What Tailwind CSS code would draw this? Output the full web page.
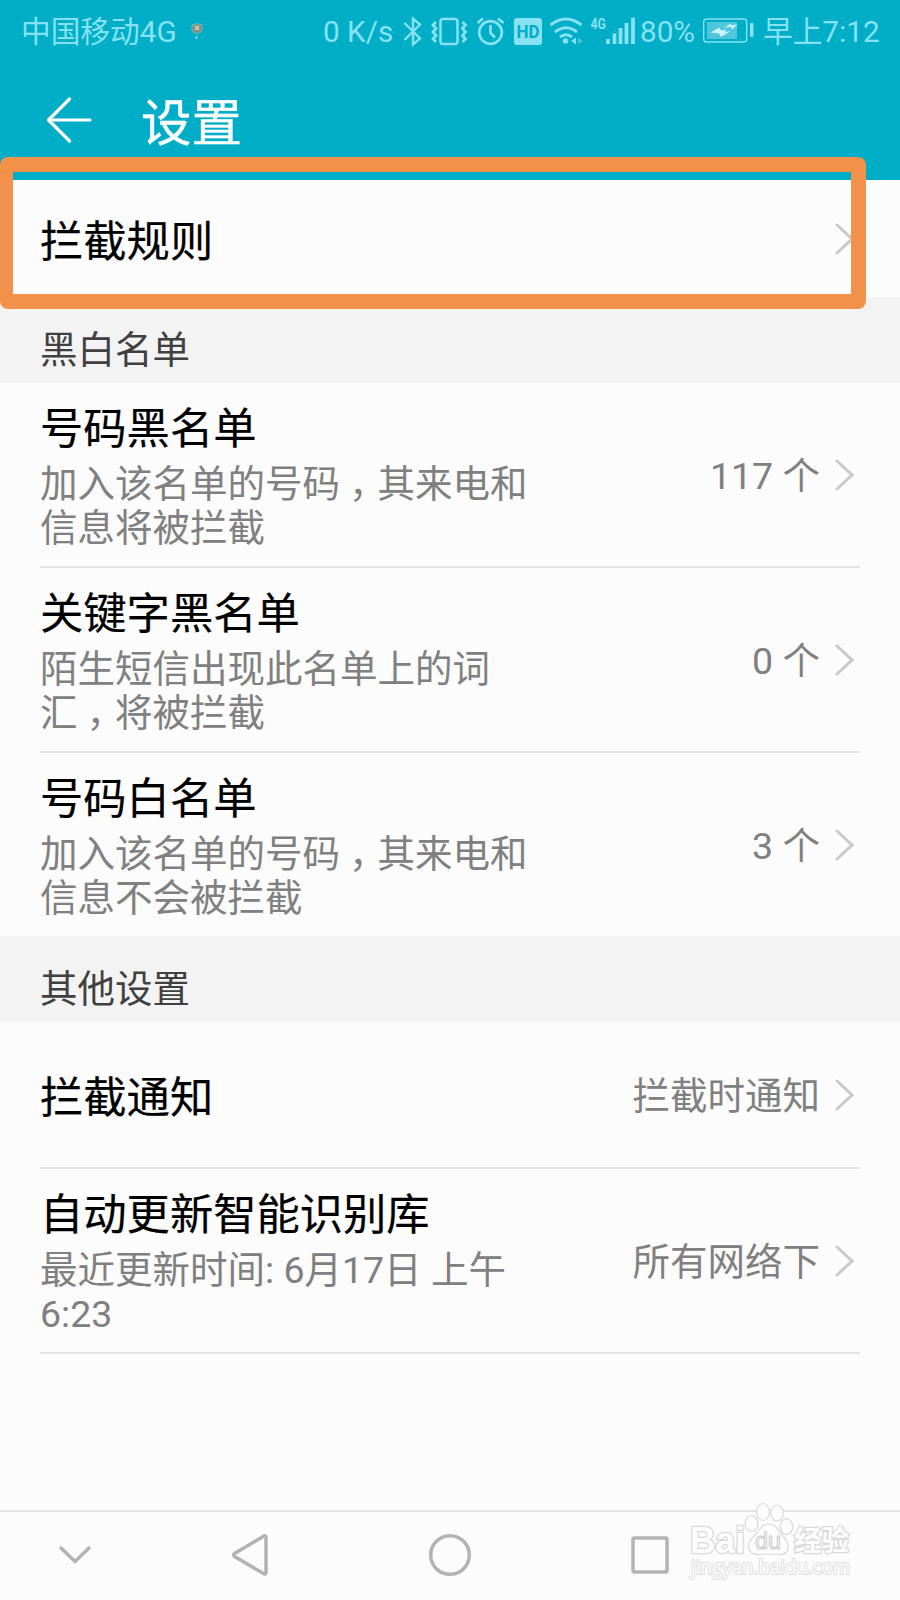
<!DOCTYPE html>
<html lang="zh-CN">
<head>
<meta charset="utf-8">
<title>设置</title>
<script src="https://cdn.jsdelivr.net/npm/@tailwindcss/browser@4"></script>
</head>
<body class="w-[900px] h-[1600px] overflow-hidden bg-[#fcfcfc] font-[Roboto,'Noto_Sans_CJK_SC',sans-serif]">
<div class="relative flex h-[1600px] w-[900px] flex-col">
  <header class="h-[180px] shrink-0 bg-[#00adc7]">
    <div class="flex h-[62px] items-center pl-[21px] text-[29.700px] leading-[40px] whitespace-nowrap text-[#86e2f0]">
      <span class="w-[170px] pt-px">中国移动4G</span>
      <svg class="w-[12px] h-[18px]" viewBox="0 0 12 18"><path d="M1 3Q6 0 11 3V9Q6 14 1 9Z" fill="#7d8c85" stroke="#62c3bd"/><path d="M4 4l4 4M8 4L4 8" stroke="#e5c9b5" stroke-width="1.5"/><circle cx="5.500" cy="15.500" r="1.200" fill="#86e2f0"/></svg>
      <span class="ml-[120px] w-[77px] pt-px">0 K/s</span>
      <svg class="w-[240px] h-[60px] shrink-0" viewBox="400 0 240 60" fill="none" stroke="#86e2f0" stroke-width="2.400">
        <path d="M404.500 22l15.500 15.500-7 6V17.500l7 6L404.500 39"/>
        <rect x="440.500" y="18" width="17" height="25" rx="2.500" stroke-width="2.500"/>
        <path d="M436 21l-3 3 3 3.500-3 3.500 3 3.500-3 3.500 3 3M462.500 21l3 3-3 3.500 3 3.500-3 3.500 3 3.500-3 3" stroke-width="2.800"/>
        <circle cx="490.500" cy="31.500" r="11.300" stroke-width="2.700"/><path d="M490.500 24v8l4.500 4.500M477.500 22l5.500-4.500M503.500 22l-5.500-4.500" stroke-width="2.700"/>
        <rect x="514" y="17" width="28" height="27" rx="3" fill="#86e2f0" stroke="none"/>
        <text x="528" y="36.500" text-anchor="middle" font-size="17.500" font-weight="700" textLength="23" lengthAdjust="spacingAndGlyphs" fill="#00adc7" stroke="none">HD</text>
        <path d="M550.500 24q15.500-12 31 0M555 31q11-8.500 22 0M560 36q6-4.500 12 0" stroke-width="3"/>
        <circle cx="565.500" cy="40" r="2.800" fill="#86e2f0" stroke="none"/><path d="M576 36.500v7l-5-3.500z" fill="#86e2f0" stroke="none"/><path d="M578 36.500v7l5-3.500z" fill="#3fc1d6" stroke="none"/>
        <text x="590.500" y="27.500" font-size="15" font-weight="700" textLength="15.500" lengthAdjust="spacingAndGlyphs" fill="#86e2f0" stroke="none">4G</text>
        <path d="M608 38v5M614.500 32.500V43M620.500 27V43M626.500 22V43M633 16.500V43" stroke-width="3.800"/>
      </svg>
      <span class="w-[62px] pt-px">80%</span>
      <svg class="w-[52px] h-[30px] shrink-0" viewBox="702 16 52 30"><rect x="703.700" y="19" width="43" height="23" rx="3" fill="none" stroke="#86e2f0" stroke-width="1.400"/><rect x="707" y="22" width="30" height="17" fill="#4fc7da"/><path d="M710.500 32.500l9-5 1.500 3 5-1-1 2.500 6-1-10 6-2-3.500zM724.500 27.500l6-4 1.500 2 5.500-1.500-5 5.500-2-2.500z" fill="#c9f3f8"/><rect x="750" y="23" width="3.500" height="14" rx="1" fill="#86e2f0"/></svg>
      <span class="ml-[9px] pt-px">早上7:12</span>
    </div>
    <div class="flex h-[116px] items-center pl-[45px] text-white">
      <svg class="w-[48px] h-[48px]" viewBox="45 96 48 48" fill="none" stroke="currentColor" stroke-width="3.200" stroke-linecap="round" stroke-linejoin="round"><path d="M90 120H48.500M69.500 99l-21 21 21 21"/></svg>
      <h1 class="ml-[48px] pt-[8px] text-[50.500px] leading-[60px] [-webkit-text-stroke:0.4px]">设置</h1>
    </div>
  </header>

  <main class="flex flex-col text-[37.500px] text-[#808080]">
    <section class="flex h-[117px] items-center justify-between pl-[40px] pr-[46px]">
      <h2 class="pt-[8px] text-[43.300px] leading-[60px] text-black [-webkit-text-stroke:0.2px]">拦截规则</h2>
      <svg class="w-[19px] h-[34px]" viewBox="0 0 19 34" fill="none" stroke="#c9c9c9" stroke-width="3" stroke-linecap="round"><path d="M2 3l15 14L2 31"/></svg>
    </section>
    <div class="flex h-[86px] items-center bg-[#f3f3f3] pl-[40px] pt-[19px] text-[#404040] leading-[50px]">黑白名单</div>

    <section class="mx-10 flex h-[185px] items-center justify-between border-b-2 border-[#e4e4e4] pr-[6px]">
      <div class="leading-[44px]"><h2 class="pt-[1px] pb-[2px] text-[43.300px] leading-[60px] text-black [-webkit-text-stroke:0.2px]">号码黑名单</h2><p>加入该名单的号码<span class="relative left-[9px]">，</span>其来电和<br>信息将被拦截</p></div>
      <div class="flex items-center gap-[15px]"><span class="pt-[3px]">117 个</span><svg class="w-[19px] h-[34px]" viewBox="0 0 19 34" fill="none" stroke="#c9c9c9" stroke-width="3" stroke-linecap="round"><path d="M2 3l15 14L2 31"/></svg></div>
    </section>
    <section class="mx-10 flex h-[185px] items-center justify-between border-b-2 border-[#e4e4e4] pr-[6px]">
      <div class="leading-[44px]"><h2 class="pt-[1px] pb-[2px] text-[43.300px] leading-[60px] text-black [-webkit-text-stroke:0.2px]">关键字黑名单</h2><p>陌生短信出现此名单上的词<br>汇<span class="relative left-[9px]">，</span>将被拦截</p></div>
      <div class="flex items-center gap-[15px]"><span class="pt-[3px]">0 个</span><svg class="w-[19px] h-[34px]" viewBox="0 0 19 34" fill="none" stroke="#c9c9c9" stroke-width="3" stroke-linecap="round"><path d="M2 3l15 14L2 31"/></svg></div>
    </section>
    <section class="mx-10 flex h-[183px] items-center justify-between pr-[6px]">
      <div class="leading-[44px]"><h2 class="pt-[1px] pb-[2px] text-[43.300px] leading-[60px] text-black [-webkit-text-stroke:0.2px]">号码白名单</h2><p>加入该名单的号码<span class="relative left-[9px]">，</span>其来电和<br>信息不会被拦截</p></div>
      <div class="flex items-center gap-[15px]"><span class="pt-[3px]">3 个</span><svg class="w-[19px] h-[34px]" viewBox="0 0 19 34" fill="none" stroke="#c9c9c9" stroke-width="3" stroke-linecap="round"><path d="M2 3l15 14L2 31"/></svg></div>
    </section>

    <div class="flex h-[86px] items-center bg-[#f3f3f3] pl-[40px] pt-[19px] text-[#404040] leading-[50px]">其他设置</div>
    <section class="mx-10 flex h-[147px] items-center justify-between border-b-2 border-[#e4e4e4] pr-[6px]">
      <h2 class="pt-[8px] text-[43.300px] leading-[60px] text-black [-webkit-text-stroke:0.2px]">拦截通知</h2>
      <div class="flex items-center gap-[15px]"><span class="pt-[4px]">拦截时通知</span><svg class="w-[19px] h-[34px]" viewBox="0 0 19 34" fill="none" stroke="#c9c9c9" stroke-width="3" stroke-linecap="round"><path d="M2 3l15 14L2 31"/></svg></div>
    </section>
    <section class="mx-10 flex h-[185px] items-center justify-between border-b-2 border-[#e4e4e4] pr-[6px]">
      <div class="leading-[44px]"><h2 class="pt-[1px] pb-[2px] text-[43.300px] leading-[60px] text-black [-webkit-text-stroke:0.2px]">自动更新智能识别库</h2><p>最近更新时间: 6月17日 上午<br>6:23</p></div>
      <div class="flex items-center gap-[15px]"><span class="pt-[4px]">所有网络下</span><svg class="w-[19px] h-[34px]" viewBox="0 0 19 34" fill="none" stroke="#c9c9c9" stroke-width="3" stroke-linecap="round"><path d="M2 3l15 14L2 31"/></svg></div>
    </section>
  </main>

  <nav class="mt-auto h-[90px] border-t-2 border-[#e4e4e4]">
    <svg class="w-[900px] h-[88px]" viewBox="0 1512 900 88" fill="none" stroke="#b3b3b3" stroke-width="3.500" stroke-linecap="round" stroke-linejoin="round"><path d="M61 1548l14 13.500 14-13.500"/><path d="M266 1537v36q-.5 1.500-2 .8L234.500 1556.500q-1.500-1.500 0-3L264 1536q1.500-.5 2 1z"/><circle cx="450" cy="1555" r="19.300"/><rect x="633" y="1538" width="34" height="34" rx="1.500"/></svg>
  </nav>

  <div class="absolute left-0 top-[157px] h-[152px] w-[866px] rounded-[8px] bg-[#f2924a] [clip-path:polygon(evenodd,0_0,866px_0,866px_152px,0_152px,0_0,13px_15px,851px_15px,851px_137px,13px_137px,13px_15px,0_0)]"></div>

  <svg class="absolute left-[680px] top-[1495px] h-[100px] w-[180px]" viewBox="680 1495 180 100" fill="#fdfdfd" stroke="#d9d9d9" stroke-width="1.200">
    <g font-weight="700" paint-order="stroke" stroke-width="2.500"><text x="690" y="1553" font-family="Liberation Sans" font-size="36" textLength="55" lengthAdjust="spacingAndGlyphs">Bai</text><text x="794" y="1551" font-family="Noto Sans CJK SC" font-size="28" textLength="55" lengthAdjust="spacingAndGlyphs">经验</text></g>
    <ellipse cx="751.500" cy="1523.500" rx="6.500" ry="8"/><ellipse cx="763" cy="1512" rx="6.300" ry="8.500"/><ellipse cx="777" cy="1513" rx="6.300" ry="8"/><ellipse cx="786.500" cy="1526.500" rx="6.300" ry="7.800"/>
    <path d="M769 1524c-8 0-9 6-14 11-6 6-8 10-6 14 3 8 13 5 20 5s17 3 19-5c1-5-1-9-6-14-5-6-6-11-13-11z"/>
    <text x="755" y="1549" font-family="Liberation Sans" font-size="24" textLength="26" lengthAdjust="spacingAndGlyphs" stroke="#cfcfcf">du</text>
    <text x="691" y="1574" font-family="Open Sans" font-size="19.500" textLength="159" lengthAdjust="spacingAndGlyphs" paint-order="stroke" stroke="#dedede" stroke-width="2">jingyan.baidu.com</text>
  </svg>
</div>
</body>
</html>
